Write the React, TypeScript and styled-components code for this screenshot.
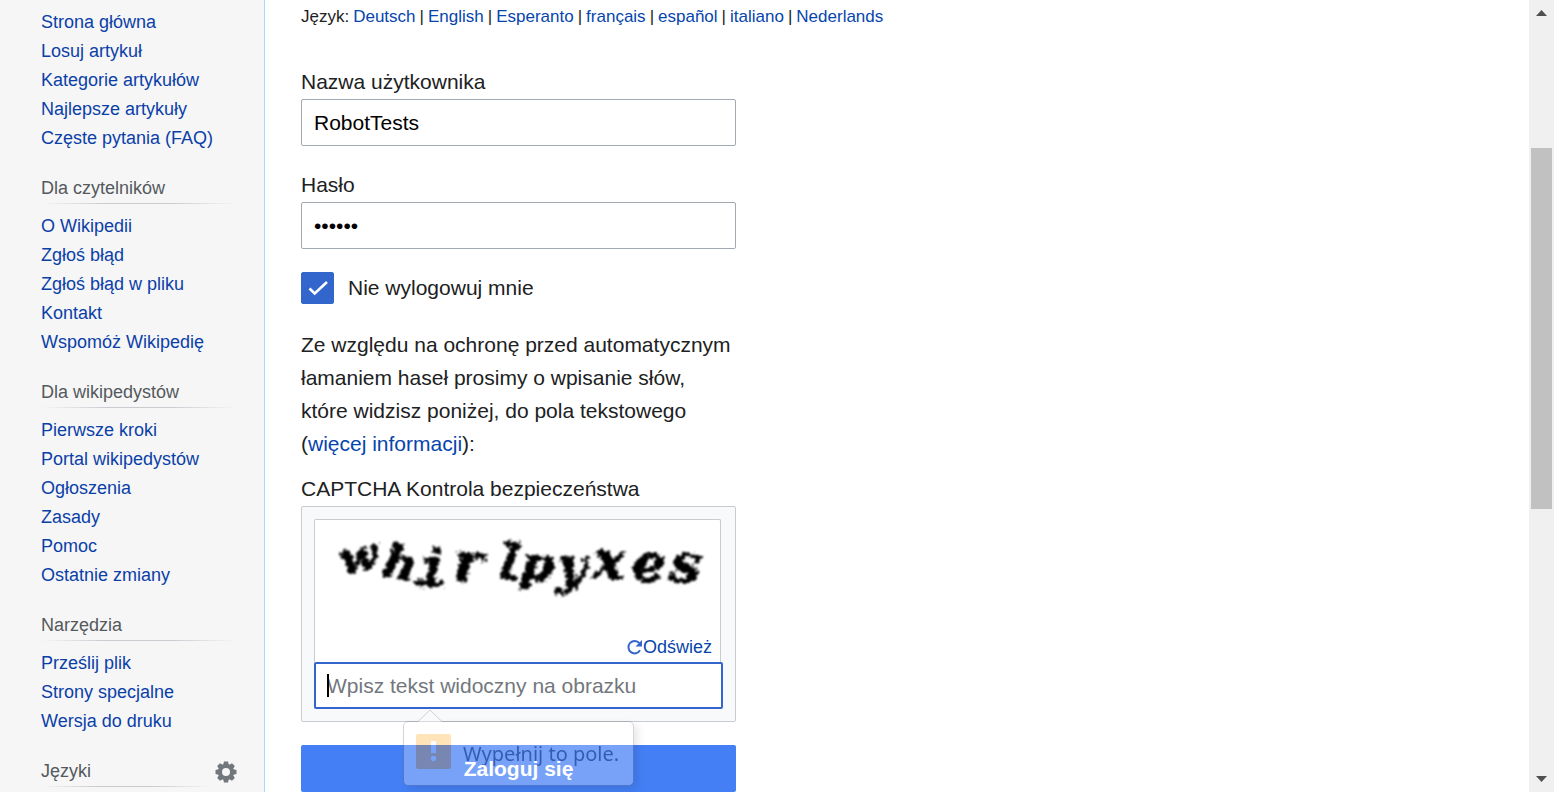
import React from 'react';
import styled, { createGlobalStyle } from 'styled-components';

const sans = '"Liberation Sans", Arial, Helvetica, sans-serif';

const GlobalStyle = createGlobalStyle`
  *, *::before, *::after { box-sizing: border-box; }
  body { margin: 0; background: #fff; color: #202122; font-family: ${sans}; overflow: hidden; }
  a { color: #0645ad; text-decoration: none; }
  a:hover { text-decoration: underline; }
`;

const Page = styled.div`
  display: flex;
  height: 100vh;
  overflow: hidden;
`;

const Sidebar = styled.nav`
  flex: 0 0 265px;
  padding: 8px 27px 0 41px;
  background: #f6f6f6;
  border-right: 1px solid #a7d7f9;
  overflow: hidden;
`;

const Section = styled.section`
  margin-bottom: 21px;
`;

const SectionHead = styled.div`
  display: flex;
  align-items: center;
  margin-bottom: 8px;
`;

const SectionTitle = styled.h3`
  flex: 1;
  height: 30px;
  margin: 0;
  font-size: 18px;
  font-weight: 400;
  line-height: 29px;
  color: #54595d;
  background: linear-gradient(to right, rgba(200, 204, 209, 0) 0%, #c8ccd1 33%, #c8ccd1 66%, rgba(200, 204, 209, 0) 100%) bottom / 100% 1px no-repeat;
`;

const GearButton = styled.button`
  display: flex;
  margin: 0 0 0 4px;
  padding: 0;
  border: 0;
  background: none;
  color: #72777d;
`;

const LinkList = styled.ul`
  margin: 0;
  padding: 0;
  list-style: none;
  font-size: 18px;
  line-height: 29px;
  white-space: nowrap;

  a { color: #0b3fa8; }
`;

const Main = styled.main`
  flex: 1;
  min-width: 0;
  padding: 5px 36px 0;
`;

const Languages = styled.div`
  display: flex;
  flex-wrap: wrap;
  gap: 4px;
  font-size: 17px;
  line-height: 24px;
`;

const Form = styled.form`
  width: 435px;
  margin-top: 36px;
  font-size: 21px;
`;

const Field = styled.div`
  margin-bottom: 22px;
`;

const Label = styled.label`
  display: block;
  padding-bottom: 1px;
  line-height: 33px;
`;

const TextInput = styled.input<{ $active?: boolean }>`
  display: block;
  width: 100%;
  height: 47px;
  padding: 0 ${p => (p.$active ? 11 : 12)}px;
  border: ${p => (p.$active ? '2px solid #3366cc' : '1px solid #a2a9b1')};
  border-radius: 2px;
  outline: 0;
  background: #fff;
  color: #000;
  font: 21px ${sans};

  &::placeholder { color: #72777d; opacity: 1; }
`;

const CheckRow = styled.label`
  display: flex;
  align-items: center;
  gap: 14px;
  height: 34px;
  margin-bottom: 23px;
`;

const CheckWrap = styled.span`
  position: relative;
  width: 33px;
  height: 32px;

  svg { position: absolute; inset: 0; pointer-events: none; }
`;

const Checkbox = styled.input`
  display: block;
  appearance: none;
  width: 33px;
  height: 32px;
  margin: 0;
  border-radius: 2px;
  background: #fff;
  border: 1px solid #72777d;

  &:checked { background: #3366cc; border-color: #3366cc; }
`;

const Notice = styled.p`
  margin: 0 0 12px;
  line-height: 33px;
`;

const CaptchaBox = styled.div`
  margin-bottom: 23px;
  padding: 12px;
  border: 1px solid #c8ccd1;
  border-radius: 2px;
  background: #f8f9fa;
`;

const CaptchaPicture = styled.div`
  display: flex;
  flex-direction: column;
  justify-content: space-between;
  height: 143px;
  margin-right: 2px;
  padding-bottom: 4px;
  border: 1px solid #c8ccd1;
  border-bottom: 0;
  border-radius: 2px 2px 0 0;
  background: #fff;

  > svg { display: block; width: 100%; height: 100px; }
`;

const Refresh = styled.a`
  display: flex;
  align-self: flex-end;
  align-items: center;
  gap: 1px;
  margin-right: 8px;
  font-size: 18px;
  line-height: 22px;
`;

const CaptchaEntry = styled.div`
  position: relative;
`;

const Caret = styled.span`
  position: absolute;
  top: 12px;
  left: 13px;
  width: 2px;
  height: 23px;
  background: #000;
`;

const Bubble = styled.div`
  position: absolute;
  top: 59px;
  left: 89px;
  z-index: 1;
  display: flex;
  align-items: center;
  gap: 12px;
  width: 231px;
  height: 65px;
  padding: 0 12px;
  border: 1px solid #666;
  border-radius: 5px;
  background: #fff;
  box-shadow: 4px 4px 8px rgba(0, 0, 0, 0.35);
  color: #000;
  font: 20px "Noto Sans", "Open Sans", sans-serif;
  white-space: nowrap;
  opacity: 0.27;
`;

const BubbleTip = styled.svg`
  position: absolute;
  top: -13px;
  left: 14px;
`;

const Warning = styled.svg`
  flex: none;
  margin-top: -4px;
`;

const Submit = styled.button`
  display: block;
  width: 100%;
  height: 47px;
  padding: 0;
  border: 0;
  border-radius: 2px;
  background: #447ff5;
  color: #fff;
  font: bold 21px ${sans};

  span { position: relative; z-index: 2; }
`;

const ScrollTrack = styled.div`
  display: flex;
  flex: 0 0 25px;
  flex-direction: column;
  align-items: center;
  justify-content: space-between;
  padding: 10px 0;
  position: relative;
  background: #f0f0f0;
`;

const ScrollThumb = styled.div`
  position: absolute;
  top: 148px;
  left: 2px;
  width: 21px;
  height: 361px;
  background: #c1c1c1;
`;

const sections: { title?: string; links: string[] }[] = [
  { links: ['Strona główna', 'Losuj artykuł', 'Kategorie artykułów', 'Najlepsze artykuły', 'Częste pytania (FAQ)'] },
  { title: 'Dla czytelników', links: ['O Wikipedii', 'Zgłoś błąd', 'Zgłoś błąd w pliku', 'Kontakt', 'Wspomóż Wikipedię'] },
  { title: 'Dla wikipedystów', links: ['Pierwsze kroki', 'Portal wikipedystów', 'Ogłoszenia', 'Zasady', 'Pomoc', 'Ostatnie zmiany'] },
  { title: 'Narzędzia', links: ['Prześlij plik', 'Strony specjalne', 'Wersja do druku'] },
];

const languages = ['Deutsch', 'English', 'Esperanto', 'français', 'español', 'italiano', 'Nederlands'];

const serif = 'DejaVu Serif, serif';
const mono = 'Liberation Mono, monospace';

const captchaLetters = [
  { c: 'w', x: 25, y: 53, r: -12, s: 45, f: serif },
  { c: 'h', x: 68, y: 59, r: 12, s: 46, f: serif },
  { c: 'i', x: 100, y: 66, r: 2, s: 54, f: mono },
  { c: 'r', x: 138, y: 62, r: 4, s: 56, f: serif },
  { c: 'l', x: 176, y: 59, r: 10, s: 52, f: mono },
  { c: 'p', x: 206, y: 60, r: 6, s: 47, f: serif },
  { c: 'y', x: 242, y: 63, r: 4, s: 50, f: serif },
  { c: 'x', x: 278, y: 59, r: 2, s: 54, f: serif },
  { c: 'e', x: 317, y: 61, r: 8, s: 52, f: serif },
  { c: 's', x: 355, y: 62, r: 6, s: 54, f: serif },
];

function CaptchaDrawing() {
  return (
    <svg viewBox="0 0 405 100" role="img" aria-label="CAPTCHA">
      <filter id="ragged" x="0" y="0" width="405" height="100" filterUnits="userSpaceOnUse">
        <feTurbulence type="fractalNoise" baseFrequency="0.28" numOctaves="1" seed="4" result="noise" />
        <feDisplacementMap in="SourceGraphic" in2="noise" scale="10" xChannelSelector="R" yChannelSelector="G" />
        <feGaussianBlur stdDeviation="1" />
      </filter>
      <g filter="url(#ragged)" fontStyle="italic" fontWeight="700" stroke="#000" strokeWidth="1">
        {captchaLetters.map(l => (
          <text key={l.c} x={l.x} y={l.y} fontSize={l.s} fontFamily={l.f} transform={`rotate(${l.r} ${l.x + 15} ${l.y - 12})`}>{l.c}</text>
        ))}
      </g>
    </svg>
  );
}

function Gear() {
  return (
    <svg width="22" height="22" viewBox="0 0 22 22" aria-hidden="true">
      <g fill="currentColor">
        {[0, 45, 90, 135].map(a => (
          <path key={a} d="M9 .5h4l1 4v13l-1 4H9l-1-4v-13z" transform={`rotate(${a} 11 11)`} />
        ))}
        <circle cx="11" cy="11" r="8" />
      </g>
      <circle cx="11" cy="11" r="4" fill="#f6f6f6" />
    </svg>
  );
}

export default function App() {
  return (
    <Page>
      <GlobalStyle />
      <Sidebar>
        {sections.map((s, i) => (
          <Section key={i}>
            {s.title && <SectionHead><SectionTitle>{s.title}</SectionTitle></SectionHead>}
            <LinkList>
              {s.links.map(l => <li key={l}><a href="#">{l}</a></li>)}
            </LinkList>
          </Section>
        ))}
        <Section>
          <SectionHead>
            <SectionTitle>Języki</SectionTitle>
            <GearButton type="button" aria-label="Ustawienia języka"><Gear /></GearButton>
          </SectionHead>
        </Section>
      </Sidebar>
      <Main>
        <Languages>
          <span>Język:</span>
          {languages.map((l, i) => (
            <React.Fragment key={l}>{i > 0 && <span>|</span>}<a href="#">{l}</a></React.Fragment>
          ))}
        </Languages>
        <Form onSubmit={e => e.preventDefault()}>
          <Field>
            <Label htmlFor="user">Nazwa użytkownika</Label>
            <TextInput id="user" defaultValue="RobotTests" />
          </Field>
          <Field>
            <Label htmlFor="password">Hasło</Label>
            <TextInput id="password" type="password" defaultValue="abcdef" />
          </Field>
          <CheckRow>
            <CheckWrap>
              <Checkbox type="checkbox" defaultChecked />
              <svg width="33" height="32" viewBox="0 0 33 32" aria-hidden="true">
                <path d="M8.5 16.500l5.200 5L26 10" fill="none" stroke="#fff" strokeWidth="2.600" />
              </svg>
            </CheckWrap>
            Nie wylogowuj mnie
          </CheckRow>
          <Notice>
            Ze względu na ochronę przed automatycznym łamaniem haseł prosimy o wpisanie słów, które widzisz poniżej, do pola tekstowego (<a href="#">więcej informacji</a>):
          </Notice>
          <Label htmlFor="captcha">CAPTCHA Kontrola bezpieczeństwa</Label>
          <CaptchaBox>
            <CaptchaPicture>
              <CaptchaDrawing />
              <Refresh href="#">
                <svg width="15" height="16" viewBox="0 0 15 16" aria-hidden="true">
                  <path d="M12.4 4.2A6.2 6.2 0 1 0 13 11.300" fill="none" stroke="#3366cc" strokeWidth="2" />
                  <path d="M15 1v6.500H8.500z" fill="#3366cc" />
                </svg>
                Odśwież
              </Refresh>
            </CaptchaPicture>
            <CaptchaEntry>
              <TextInput id="captcha" $active placeholder="Wpisz tekst widoczny na obrazku" />
              <Caret />
              <Bubble role="alert">
                <BubbleTip width="24" height="13" viewBox="0 0 24 13" aria-hidden="true">
                  <path d="M0 13L12 1l12 12z" fill="#fff" />
                  <path d="M0 12.500L12 1l12 11.500" fill="none" stroke="#666" />
                </BubbleTip>
                <Warning width="35" height="35" viewBox="0 0 35 35" aria-hidden="true">
                  <rect width="35" height="35" rx="2" fill="#ff9f00" />
                  <path d="M15 7h5v12h-5z" fill="#fff" />
                  <circle cx="17.500" cy="24.500" r="2.700" fill="#fff" />
                </Warning>
                Wypełnij to pole.
              </Bubble>
            </CaptchaEntry>
          </CaptchaBox>
          <Submit type="submit"><span>Zaloguj się</span></Submit>
        </Form>
      </Main>
      <ScrollTrack aria-hidden="true">
        <svg width="11" height="6" viewBox="0 0 11 6"><path d="M0 6L5.500 0 11 6z" fill="#505050" /></svg>
        <ScrollThumb />
        <svg width="11" height="6" viewBox="0 0 11 6"><path d="M0 0l5.500 6L11 0z" fill="#505050" /></svg>
      </ScrollTrack>
    </Page>
  );
}
